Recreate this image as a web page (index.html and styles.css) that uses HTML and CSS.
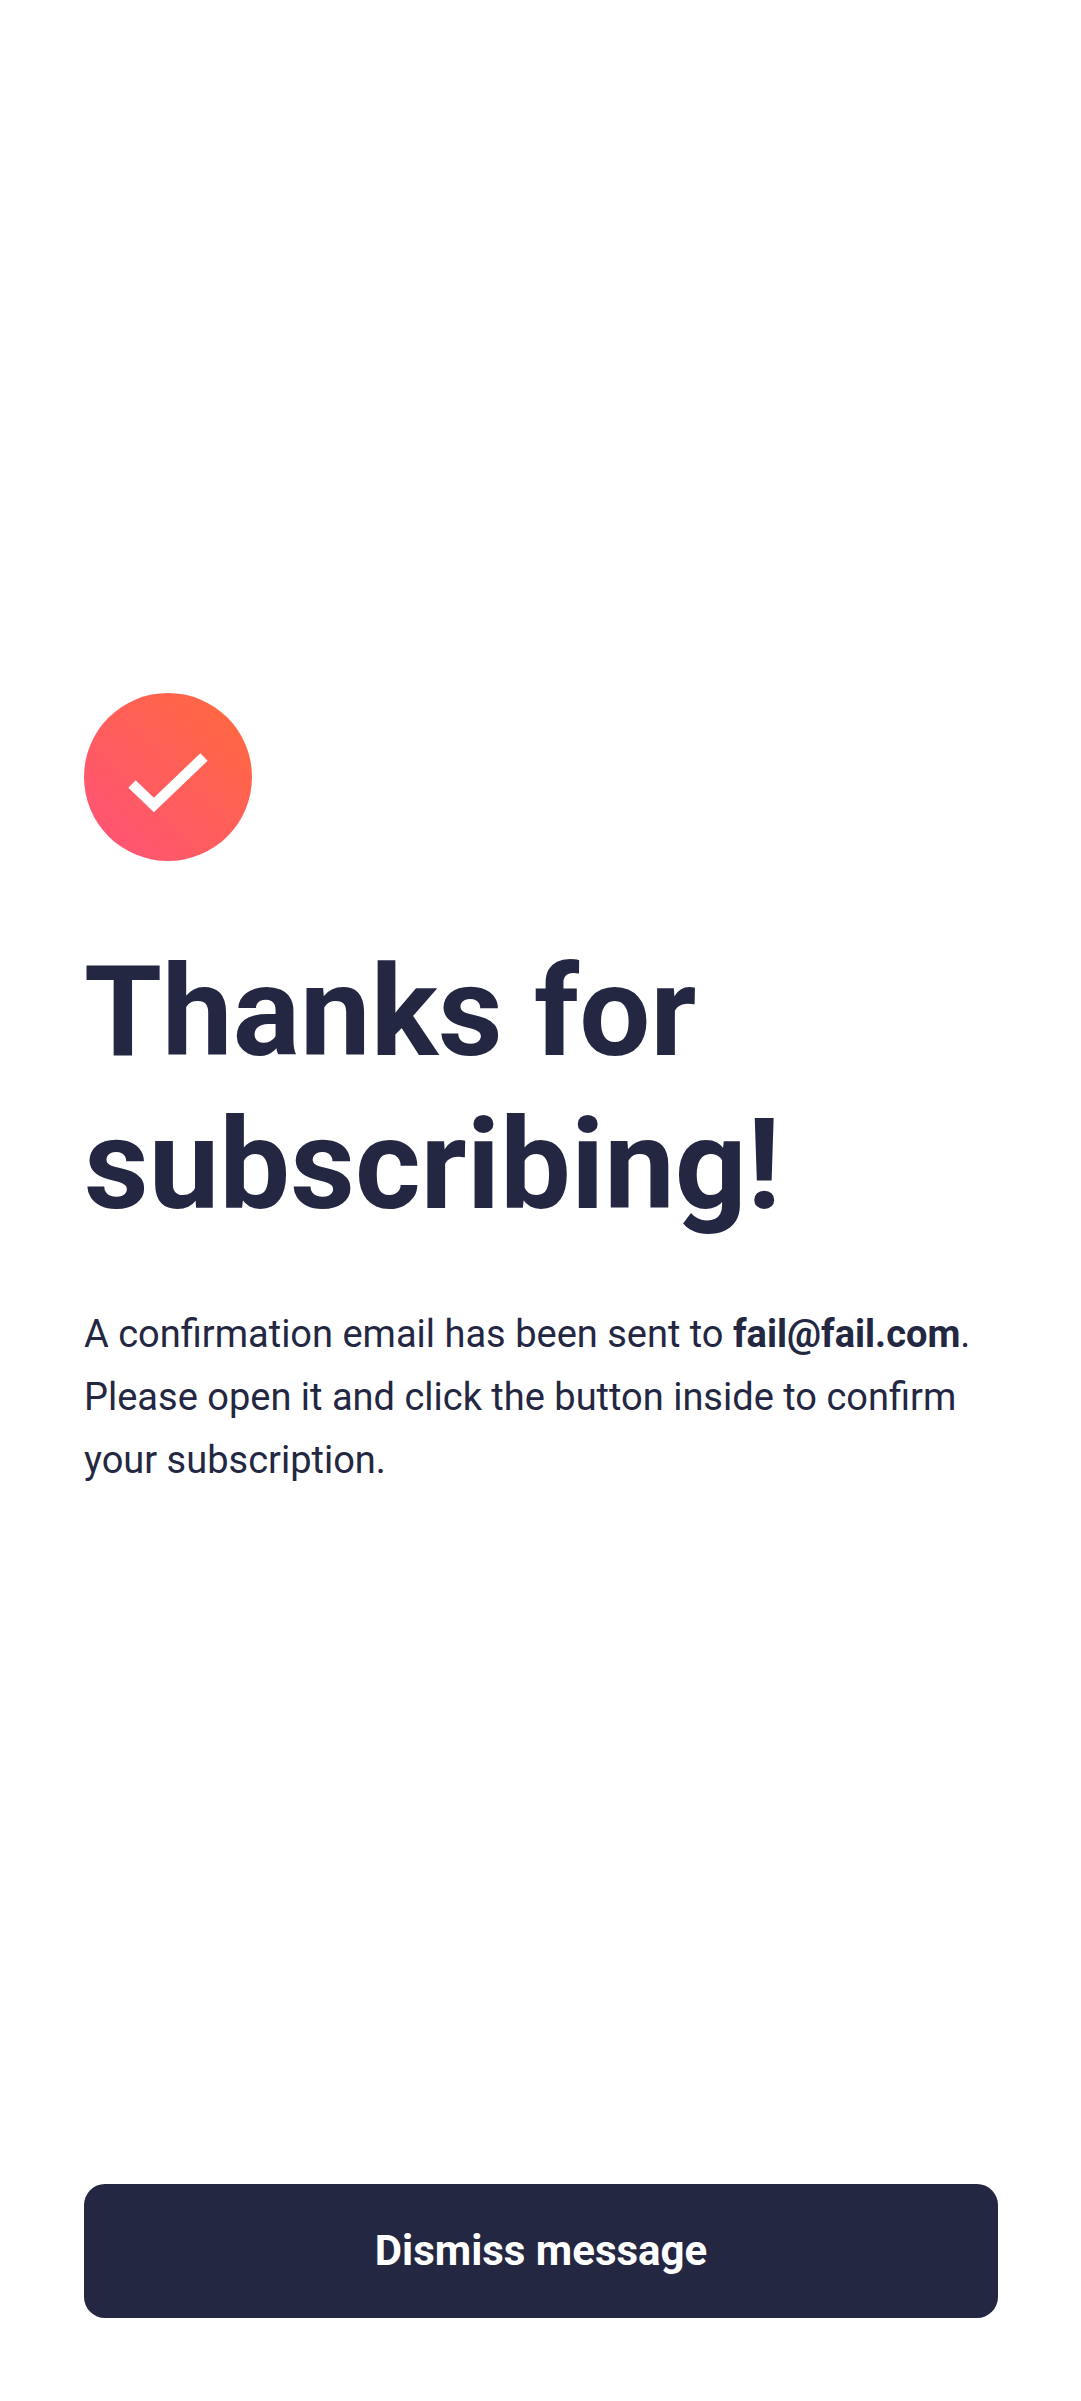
FILE: index.html
```html
<!DOCTYPE html>
<html lang="en">
<head>
  <meta charset="utf-8">
  <meta name="viewport" content="width=device-width, initial-scale=1">
  <title>Thanks for subscribing!</title>
  <link rel="stylesheet" href="styles.css">
</head>
<body>
  <main class="success">
    <section class="message">
      <svg class="icon" viewBox="0 0 64 64" aria-hidden="true">
        <defs>
          <linearGradient id="badge" x1="100%" x2="0%" y1="0%" y2="100%">
            <stop offset="0%" stop-color="#FF6A3A"/>
            <stop offset="100%" stop-color="#FF527B"/>
          </linearGradient>
        </defs>
        <circle cx="32" cy="32" r="32" fill="url(#badge)"/>
        <path fill="none" stroke="#FFF" stroke-width="4" d="m18.286 34.686 8.334 7.98 19.094-18.285"/>
      </svg>
      <h1 class="title">Thanks for subscribing!</h1>
      <p class="text">A confirmation email has been sent to <strong>fail@fail.com</strong>. Please open it and click the button inside to confirm your subscription.</p>
    </section>
    <button class="dismiss" type="button">Dismiss message</button>
  </main>
</body>
</html>
```
FILE: styles.css
```css
* {
  box-sizing: border-box;
}

body {
  margin: 0;
  background: #fff;
  color: #242742;
  font-family: Roboto, sans-serif;
}

.success {
  display: flex;
  flex-direction: column;
  min-height: 100vh;
  padding: 0 83px 83px 84px;
}

.message {
  flex: 1;
  display: flex;
  flex-direction: column;
  justify-content: center;
}

.icon {
  width: 168px;
  height: 168px;
}

.title {
  margin: 75px 0 61px;
  font-size: 126px;
  font-weight: 700;
  line-height: 153px;
}

.text {
  margin: 0;
  font-size: 38px;
  line-height: 63px;
}

.dismiss {
  width: 100%;
  padding: 42px;
  border: 0;
  border-radius: 21px;
  background: #242742;
  color: #fff;
  font-family: inherit;
  font-size: 42px;
  font-weight: 700;
  line-height: 50px;
}
```
